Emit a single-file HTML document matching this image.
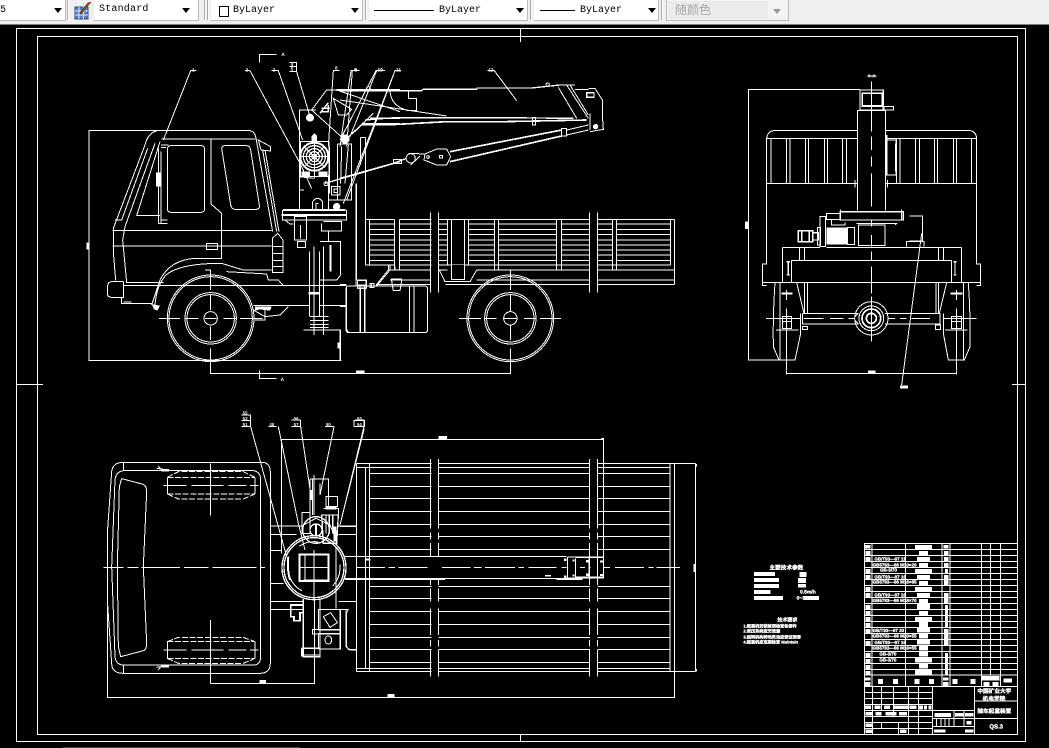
<!DOCTYPE html>
<html lang="zh"><head><meta charset="utf-8"><title>Drawing</title>
<style>
html,body{margin:0;padding:0;background:#000;width:1049px;height:748px;overflow:hidden}
#tb{position:absolute;left:0;top:0;width:1049px;height:24px;background:#efefef;border-bottom:1px solid #7f7f7f;font-family:"Liberation Mono",monospace;font-size:10px;color:#000}
#tb div{position:absolute}
.box{background:#fff;top:0;height:20px;border-bottom:1px solid #bbb;border-right:1px solid #bbb}
.sep{top:0;width:1px;height:20px;background:#aaa;border-right:1px solid #fff}
.ar{top:8px;width:0;height:0;border-left:4px solid transparent;border-right:4px solid transparent;border-top:5px solid #000}
.tx{top:5px;white-space:pre;line-height:11px}
svg{position:absolute;left:0;top:0}
svg .f{fill:#fff;stroke:none}
svg .k{fill:#000;stroke:none}
svg text{fill:#fff;stroke:none;font-family:"Liberation Sans","Noto Sans CJK SC",sans-serif;font-weight:bold}
svg .h text{stroke:#fff;stroke-width:.9}
</style></head><body>
<div id="tb">
<div class="box" style="left:0;width:65px"></div>
<div class="tx" style="left:0">5</div>
<div class="ar" style="left:54px"></div>
<div class="sep" style="left:67px"></div>
<div class="box" style="left:94px;width:104px"></div>
<div class="tx" style="left:99px;top:4px;letter-spacing:.2px">Standard</div>
<div class="ar" style="left:182px"></div>
<div class="sep" style="left:204px"></div><div class="sep" style="left:207px"></div>
<div class="box" style="left:211px;width:151px"></div>
<div style="left:219px;top:6px;width:8px;height:9px;border:1px solid #000;background:#fff"></div>
<div class="tx" style="left:233px">ByLayer</div>
<div class="ar" style="left:351px"></div>
<div class="sep" style="left:365px"></div>
<div class="box" style="left:369px;width:158px"></div>
<div style="left:374px;top:10px;width:60px;height:1px;background:#000"></div>
<div class="tx" style="left:439px">ByLayer</div>
<div class="ar" style="left:516px"></div>
<div class="sep" style="left:530px"></div>
<div class="box" style="left:534px;width:124px"></div>
<div style="left:540px;top:10px;width:35px;height:1px;background:#000"></div>
<div class="tx" style="left:580px">ByLayer</div>
<div class="ar" style="left:648px"></div>
<div class="sep" style="left:661px"></div>
<div style="left:666px;top:0;width:121px;height:20px;background:#f4f4f4;border:1px solid #bbb;border-top:0"></div>
<div style="left:668px;top:1px;width:100px;height:18px;background:#ebebeb"></div>
<div class="tx" style="left:675px;top:3px;font-family:'Liberation Sans','Noto Sans CJK SC',sans-serif;font-size:12px;line-height:14px;color:#a8a8a8">随颜色</div>
<div style="left:773px;top:9px;width:0;height:0;border-left:4px solid transparent;border-right:4px solid transparent;border-top:5px solid #999"></div>
<svg style="left:74px;top:2px" width="18" height="18" viewBox="0 0 18 18"><rect x="1" y="5" width="13" height="12" fill="#5a7fc0" stroke="#2c4a86"/><path d="M1 9H14M1 13H14M5 5V17M9.500 5V17" stroke="#dbe6f7" fill="none"/><path d="M6 12L15 1" stroke="#6b4a2a" stroke-width="2.500"/><path d="M15 1L17 0" stroke="#c33" stroke-width="2"/></svg>
</div>

<svg width="1049" height="748" viewBox="0 0 1049 748" style="top:0" fill="none" stroke="#fff" stroke-width="1" shape-rendering="crispEdges" text-rendering="geometricPrecision">
<!-- frames -->
<path d="M16.500 28.500H1025.500V741.500H16.500Z M37.500 36.500H1017.500V734.500H37.500Z M520.500 28.500V42 M520.500 734V741.500 M16.500 384.500H43 M1012 384.500H1025.500"/>
<path d="M63 747.500H300" stroke="#444"/>

<!-- SIDE VIEW -->
<g transform="translate(80,50) scale(.33333)" stroke-width="3">
<path d="M785 932H27V241H505Q525 243 528 265"/>
<path d="M240 241Q205 243 195 285L100 535V605L107 692"/>
<path d="M130 695H95Q82 695 82 715V730Q82 742 95 742H130V695M125 742V760H218M130 756H155"/>
<path d="M245 267H525M240 275L170 497H240M203 295L125 510H105M225 280L135 530L128 570L140 697H250"/>
<path d="M97 541H575M97 588H575M380 580H413V598H380Z"/>
<path d="M393 267V462L425 490V625H345Q270 630 240 690L215 765M425 640Q300 640 258 675Q230 705 225 765M425 640L490 660H575"/>
<rect x="262" y="287" width="112" height="200" rx="10"/>
<path d="M425 295Q425 287 435 287H500Q510 287 512 300L538 465Q540 478 528 478H465Q455 478 452 465Z"/>
<path d="M235 295V520M243 305V520M243 285H265M243 293H258M235 520H262M243 510H262"/>
<rect class="f" x="228" y="367" width="14" height="43"/>
<path d="M528 265L578 545M535 270L572 290V303L543 300ZM548 300L590 545M555 300L597 545"/>
<path d="M577 667V565L593 550L609 570V667ZM577 590H609M577 610H609M577 632H609M577 650H609"/>
<path d="M130 707H800M520 767H690M720 767H800M375 660H392V675M440 665L560 672L565 690H595L610 707M520 780L555 800L600 795L625 770M555 780V810H525"/>
<path class="f" d="M215 763L240 767L232 782L222 778ZM525 770H575L570 782L540 778L525 782Z"/>
<circle cx="392" cy="805" r="130"/><circle cx="392" cy="805" r="125"/><circle cx="392" cy="805" r="77"/><circle cx="392" cy="805" r="71"/><circle cx="392" cy="805" r="20"/>
<path d="M237 805H300M315 805H355M375 805H410M430 805H470M480 805H547M392 660V720M392 735V780M392 830V870M392 895V970H960"/>
<path d="M538 962V985H590M538 37V14H590"/>
<rect class="f" x="828" y="961" width="26" height="8"/><rect class="f" x="20" y="577" width="8" height="22"/><rect class="f" x="772" y="877" width="10" height="18"/>
<path d="M688 605V800M718 605V800M702 590V855M730 590V855M670 840H782V932M690 800H745M690 812H745M690 824H745M690 832H745"/>
<path d="M685 730H720" stroke-width="8"/>
<path d="M720 575H782V675L770 690H720M752 585V665" />
<path d="M752 585V665" stroke-width="6"/>
<path d="M609 480H797M605 495H800" stroke-width="5"/>
<path d="M607 480V510H800V480M615 510L630 522H640M730 515H785V543H725V520M745 543V575"/>
<path d="M643 500H680V570H643ZM652 575H677V593H652ZM662 525V565M698 480V455Q712 435 728 455V480M708 480V460H715"/>
<path d="M658 480V180H708M745 375V480M658 380L700 385M660 420H672M748 290V430"/>
<path d="M662 275H747V380H662Z"/>
<circle cx="703" cy="320" r="42" stroke-width="6"/><circle cx="703" cy="320" r="33" stroke-width="4"/><circle cx="703" cy="320" r="24" stroke-width="4"/><circle cx="703" cy="320" r="15" stroke-width="4"/><circle cx="703" cy="320" r="7" stroke-width="4"/>
<path d="M703 255V385M660 320H745M673 290L733 350M733 290L673 350"/>
<path class="f" d="M695 258L703 250L711 258V278H695ZM665 365H690V380H665ZM715 365H742V380H715Z"/>
<circle class="f" cx="690" cy="203" r="12"/>
<path d="M720 190L745 158M725 175H750M722 185H745V165" stroke-width="4"/>
<path d="M830 690V400M857 262V505M842 262H857M842 262V345M772 282H815V450H745M772 282V450M785 290L782 400M805 285L795 400"/>
<rect x="755" y="410" width="25" height="25"/><rect x="762" y="417" width="10" height="10"/>
<circle class="f" cx="795" cy="267" r="14"/><circle class="f" cx="770" cy="470" r="11"/>
<circle cx="738" cy="401" r="6"/>
<path d="M350 62H332L250 270M510 62H495M510 62L660 340L695 415M595 62H575M595 62L668 270M628 38H650V65H628M628 50H650M650 65L690 200M778 62H760L745 290M838 62H817L800 290M915 62H890L810 260M960 62H945L800 450"/>
<path d="M740 120L695 180L745 225L795 270L870 200M760 145L815 178L800 195H775ZM740 120H770L960 185M800 265L830 240L880 190"/>
<path d="M770 120H960" stroke-width="6"/><path d="M850 222H960M870 205H960" stroke-width="5"/>
<path d="M735 400L960 335" stroke-width="4"/>
<circle cx="865" cy="116" r="6"/>
<path d="M856 705H832V691H858V715H832M875 701H882V712H875Z"/>
<path d="M800 710V835Q800 848 812 848H960M842 715V848M855 715V848M888 706L925 660V645M857 645H960M857 508H945V660M868 508V645M945 522H868M945 538H868M945 553H868M945 570H868M945 585H868M945 600H868M945 615H868M945 631H868"/>
<path d="M857 400V645"/>
<text x="336" y="64" font-size="14">1</text><text x="497" y="64" font-size="14">2</text><text x="578" y="64" font-size="14">3</text><text x="765" y="58" font-size="14">8</text><text x="822" y="64" font-size="14">9</text><text x="893" y="64" font-size="14">10</text><text x="604" y="18" font-size="14">A</text><text x="602" y="993" font-size="14">A</text><text x="632" y="48" font-size="14">4</text><text x="632" y="62" font-size="14">5</text>
</g>

<g transform="translate(340,50) scale(.33333)" stroke-width="3">
<!-- bed -->
<path d="M77 508H1003M88 522H992M88 538H992M88 553H992M88 570H992M88 585H992M88 600H992M88 615H992M88 631H992M77 645H992"/>
<path class="k" d="M163 505H178V650H163ZM274 480H295V730H274ZM324 510H384V644H324ZM464 510H475V644H464ZM651 510H664V644H651ZM750 480H772V730H750ZM818 510H829V644H818Z"/>
<path d="M77 508V645M88 508V645M163 508V660M178 508V660M322 508V645M385 508V645M334 508V688H373V508M463 508V660M475 508V660M650 508V660M665 508V660M817 508V660M829 508V660M992 508V645M1003 508V703"/>
<path d="M272 488V728M296 488V728M749 488V728M773 488V728"/>
<path d="M150 645V660L110 708M150 660H272M150 690H272M112 703H272M410 660H749M773 660H1003M296 660H322M410 690H749M773 690H1003M773 703H1003M316 703H749M296 645H322M298 660L315 695H390L410 660"/>
<rect class="k" x="333" y="645" width="40" height="42"/><path d="M334 645V688H373V645"/>
<rect x="18" y="708" width="245" height="140" rx="8"/>
<path d="M60 708V848M73 708V848M208 708V848M222 708V848M0 704H20M0 770H18M0 840V930"/>
<path d="M155 687H185V692L180 722H160L155 692ZM52 690H80V714H52ZM90 700H102V712H90Z"/>
<circle cx="511" cy="805" r="130"/><circle cx="511" cy="805" r="125"/><circle cx="511" cy="805" r="77"/><circle cx="511" cy="805" r="71"/><circle cx="511" cy="805" r="20"/>
<path d="M357 805H423M433 805H470M490 805H532M552 805H590M600 805H663M511 660V720M511 735V785M511 825V870M511 895V972M0 970H512"/>
<rect class="f" x="48" y="962" width="26" height="8"/>
<!-- boom -->
<path d="M0 122H245L250 118H410L412 114H575L660 105H705" stroke-width="4"/>
<path d="M655 112L710 205M680 105L745 205M690 105L745 195M705 118H745M745 115H765L787 150V195L790 238L750 245M750 190V240"/>
<path d="M65 224H155L320 215H490L740 210" stroke-width="5"/>
<path d="M75 210L165 203H475L700 205" stroke-width="4"/>
<path d="M150 125Q155 170 205 182H230V145H205V125M0 150L320 198"/>
<rect x="740" y="128" width="22" height="14" stroke-width="4"/>
<circle class="f" cx="767" cy="230" r="8"/>
<rect x="578" y="203" width="8" height="22"/><circle cx="623" cy="104" r="5"/>
<path d="M330 305L665 240M330 335L665 258" stroke-width="5"/>
<path d="M665 236H680V258H665ZM680 240L745 225M680 255L745 240"/>
<path d="M255 312L290 297H320L332 320L320 345H290L252 330Z"/>
<rect x="299" y="316" width="8" height="8"/><circle cx="264" cy="321" r="4"/>
<circle cx="212" cy="325" r="14"/><path d="M212 345L240 318M205 310L255 312"/>
<path d="M0 385L160 340L200 325" stroke-width="4"/>
<path d="M160 340H185V328H160Z"/>
<path d="M50 62H33L0 290M130 62H108L0 270M183 62H165L10 460M463 62H443M463 62L530 152"/>
<path d="M48 707V400M76 262V505M62 262H76M62 262V345"/>
<text x="44" y="64" font-size="14">9</text><text x="113" y="64" font-size="14">10</text><text x="168" y="64" font-size="14">11</text><text x="445" y="64" font-size="14">12</text>
</g>

<!-- REAR VIEW -->
<g transform="translate(730,60) scale(.33333)" stroke-width="3">
<path d="M390 88H55V900H145"/>
<rect class="f" x="45" y="485" width="10" height="22"/>
<path d="M382 452V152H467V452"/>
<path d="M390 90H460V150H390Z" stroke-width="4"/>
<path d="M397 100H457V138H397Z" stroke-width="5"/>
<path d="M462 140H490V150H462ZM412 48H440" />
<path d="M382 212H130Q112 215 110 235V612H97V677H110M382 236H110M468 212H722Q738 215 740 235V612H752V677H740M468 236H740M110 370H382M468 370H740"/>
<path d="M123 236V370M169 236V370M180 236V370M226 236V370M236 236V370M283 236V370M293 236V370M338 236V370M350 236V370M510 236V370M556 236V370M568 236V370M613 236V370M623 236V370M670 236V370M680 236V370M725 236V370M500 236V370"/>
<path d="M470 225V345H498V240H470M497 250V335" stroke-width="4"/>
<path d="M375 360V382M472 360V382"/>
<path d="M330 455H520V480H330Z" stroke-width="4"/>
<path d="M332 448V480M514 448V480M290 460H330V478H290ZM270 470H287V560H270ZM352 503H374V553H352ZM385 495H465V557H385ZM380 490H500L495 495M305 480V495H345V488M262 503H272V555H262Z"/>
<rect class="f" x="290" y="503" width="63" height="50"/>
<path d="M205 512H248V545H205ZM215 512V545M238 512V545M248 518H265V540H248" stroke-width="4"/>
<path d="M538 468H578V543H538M530 545H582V560M530 545V560"/>
<path d="M157 563H270M290 563H695M157 563V668M695 563V668M208 563V600M224 563V600M625 563V600M640 563V600M184 601H665V667H184ZM97 668H752"/>
<path d="M170 605H180M175 605V645M170 645H180M670 605H680M675 605V645M670 645H680" stroke-width="4"/>
<path d="M135 668Q128 770 130 860L147 900H195L212 820M200 668L222 760M212 820V760M150 668V900"/>
<path d="M715 668Q722 770 720 860L703 900H655L640 820M650 668L628 760M640 820V760M700 668V900"/>
<path d="M224 668V760M232 668V760M618 668V760M626 668V760"/>
<path d="M155 700H188M662 700H698" stroke-width="6"/>
<path d="M218 760H385M465 760H630V792H465M218 760V792H385M385 760L375 770M385 792L375 782"/>
<circle cx="424" cy="775" r="50"/><circle cx="424" cy="775" r="37"/><circle cx="424" cy="775" r="28" stroke-width="5"/><circle cx="424" cy="775" r="15" stroke-width="5"/>
<path d="M218 800H232V808H218ZM617 795H632V808H617Z"/>
<path d="M138 810H205M645 810H712M158 770H185V785H158ZM158 785H185V805H158ZM665 770H695V805H665ZM665 785H695"/>
<path d="M108 775H210M222 775H280M300 775H340M355 775H375M475 775H495M510 775H530M545 775H600M640 775H740" />
<path d="M424 65V215M424 230V270M424 290V320M424 340V440M424 480V500M424 525V560M424 575V600M424 620V700M424 710V845" />
<path d="M170 690V720M170 745V930M680 690V720M680 745V930M170 940H680M170 932V944M680 932V944"/>
<rect class="f" x="414" y="931" width="22" height="9"/>
<path d="M575 520L515 975"/>
<rect class="f" x="510" y="977" width="24" height="9"/>
<text x="412" y="52" font-size="14">A-A</text>
</g>

<!-- PLAN VIEW -->
<g transform="translate(90,400) scale(.33333)" stroke-width="3">
<path d="M100 187H520Q540 190 541 215V790Q540 820 510 820H100Q65 820 65 790L52 600V400L65 215Q68 187 100 187Z"/>
<path d="M100 212H490Q512 215 512 240V770Q512 795 490 795H100Q78 795 75 770L65 500L75 240Q78 215 100 212Z"/>
<path d="M100 187V212M100 795V820"/>
<path d="M95 236L160 253Q170 258 170 275L160 500L170 730Q170 750 160 752L92 770L85 740L82 500L88 260Z"/>
<g stroke-dasharray="18 5">
<path d="M232 232H495M232 282H495M232 232L265 215H460L495 232M232 282L265 297H460L495 282"/>
<path d="M232 725H495M232 775H495M232 725L265 712H460L495 725M232 775L265 790H460L495 775"/>
</g>
<path d="M232 232V282M495 232V282M232 725V775M495 725V775M220 257H290M305 257H400M415 257H470M480 257H505M220 750H290M305 750H400M415 750H470M480 750H505M361 190V347M361 660V850"/>
<path d="M40 502H100M112 502H145M155 502H270M282 502H355M367 502H500M510 502H525" />
<circle cx="672" cy="503" r="96" stroke-width="4"/><circle cx="672" cy="503" r="90" stroke-width="4"/>
<circle cx="672" cy="503" r="78" stroke-width="3" stroke-dasharray="60 100"/>
<path d="M595 470Q590 503 600 540" stroke-width="6"/>
<path d="M628 463H716V543H628Z" stroke-width="6"/>
<path d="M645 463V543M672 450V600M628 502H716M640 540H716" />
<path d="M640 375L678 355L720 375L735 410" stroke-width="3"/>
<circle cx="678" cy="390" r="40" stroke-width="4"/><circle cx="678" cy="390" r="18" stroke-width="4"/>
<path d="M678 372V408" stroke-width="6"/>
<path d="M541 378H635M541 403H620M541 605H640M541 628H640M541 452H575M541 550H580M541 378V403M541 605V628M541 452V550M745 378H800M745 403H800M745 605H800M745 628H770Q768 630 768 640V740L780 750H800"/>
<path d="M636 338V400H660V338Z"/>
<path d="M770 470H800"/><path d="M766 537H800" stroke-width="5"/>
<path d="M640 597V770H690V600M635 745V770M640 765H690M635 745H690" stroke-width="4"/>
<path d="M685 628H752V690H685ZM685 700H752V747H685ZM668 688H752V702H668Z"/>
<path d="M700 650L722 638L742 668L720 682Z"/>
<ellipse cx="715" cy="720" rx="10" ry="12"/>
<path d="M602 615H640V638H630V662H612V650H602Z" stroke-width="5"/>
<path d="M660 237H715V320M660 237V345M668 237V345M672 225V345M690 250V285M708 290H742V320H708ZM700 325H745V345"/>
<path d="M662 270V300" stroke-width="7"/>
<path d="M695 345H745L740 430H700ZM708 345V400M718 345V400M728 345V400" stroke-width="4"/>
<path d="M706 325H740" stroke-width="8"/>
<path d="M735 380V425" stroke-width="8"/>
<path d="M738 440V625"/>
<path d="M482 45H455M482 62H455M482 80H455M482 45V80L590 470M560 80H535M565 80L625 370M632 60H605M632 80H605M632 60V80L665 300M732 80H705M732 80L690 285M822 60H795M822 80H795M822 60V80L750 375M625 370L645 450"/>
<path d="M575 118H930M575 118V460M361 850H674V600M52 620V892H930M200 205L235 210M200 802L235 797M205 198L215 210M205 810L215 797"/>
<rect class="f" x="215" y="207" width="22" height="7"/><rect class="f" x="215" y="795" width="22" height="7"/>
<rect class="f" x="508" y="840" width="20" height="9"/><rect class="f" x="892" y="882" width="22" height="9"/>
<rect class="f" x="828" y="476" width="15" height="6"/>
<text x="458" y="43" font-size="13">55</text><text x="458" y="60" font-size="13">53</text><text x="458" y="78" font-size="13">51</text><text x="538" y="78" font-size="13">48</text><text x="611" y="60" font-size="13">56</text><text x="611" y="78" font-size="13">57</text><text x="708" y="78" font-size="13">50</text><text x="801" y="60" font-size="13">53</text><text x="801" y="78" font-size="13">54</text>
</g>

<g transform="translate(340,420) scale(.33333)" stroke-width="3">
<path d="M0 58H790V475"/>
<rect class="f" x="295" y="48" width="26" height="9"/>
<path d="M88 130H1003M50 143H990M88 160H990M88 199H990M88 235H990M88 274H990M88 313H990M88 349H990M88 388H990M88 499H990M88 535H990M88 574H990M88 613H990M88 652H990M88 688H990M88 727H990M50 745H990M50 754H1003"/>
<path class="k" d="M274 110H295V775H274ZM750 110H772V775H750Z"/>
<path d="M50 130H88M50 130V754M77 143V745M88 130V754M990 130V754M1003 130V832H0M1003 754H1067M1003 130H1067M1067 130V754"/>
<path d="M272 117V325M272 337V358M272 369V495M272 505V545M272 565V645M272 660V680M272 690V770M296 117V325M296 337V358M296 369V495M296 505V545M296 565V645M296 660V680M296 690V770M748 117V325M748 337V358M748 369V495M748 505V545M748 565V645M748 660V680M748 690V770M773 117V325M773 337V358M773 369V495M773 505V545M773 565V645M773 660V680M773 690V770"/>
<path class="k" d="M90 410H680V474H90Z"/>
<path d="M15 409H680M315 475H650"/>
<path d="M15 477H315M650 477H728" stroke-width="5"/>
<path d="M0 320H50M0 343H50M0 545H50M0 568H25L20 578V680L25 688H50M0 568V688"/>
<path d="M682 411V474M707 415V474M682 411H790M682 474H790M748 411V474"/>
<path d="M707 412H790M707 472H790" stroke-width="5"/><path d="M748 412V472" stroke-width="5"/>
<path d="M48 442H135M145 442H165M175 442H262M306 442H392M402 442H425M435 442H525M535 442H552M565 442H650M665 442H680M720 442H735M745 442H752M792 442H810M825 442H912M925 442H940M950 442H1020"/>
<path d="M0 315L73 25M42 2H73V20H42Z"/>
<path class="f" d="M78 417H92V422H78ZM615 465H633V470H615ZM1060 432H1066V456H1060ZM142 822H164V831H142ZM1066 132H1071V140H1066ZM1066 747H1071V754H1066ZM783 54H792V58H783ZM672 415H680V423H672ZM672 466H680V474H672ZM697 418H704V425H697ZM697 463H704V470H697ZM738 420H746V428H738ZM738 460H746V468H738ZM780 421H789V427H780ZM780 462H789V468H780Z"/>
</g>

<!-- NOTES + TITLE BLOCK -->
<g class="h" transform="translate(740,535) scale(.33333)" stroke-width="3">
<text x="88" y="103" font-size="17">主要技术参数</text>
<path class="f" d="M42 111H105V123H42ZM42 129H117V141H42ZM42 147H117V159H42ZM42 165H92V177H42ZM42 183H129V195H42ZM178 111H200V126H178ZM174 129H198V144H174ZM174 147H198V158H174ZM190 183H237V195H190Z"/>
<text x="180" y="175" font-size="15">0.5m/h</text><text x="170" y="193" font-size="15">0~3</text>
<text x="112" y="259" font-size="15">技术要求</text>
<text x="10" y="278" font-size="12.500">1.起重机安装前须检查各部件</text>
<text x="10" y="293" font-size="12.500">2.液压系统应无泄漏</text>
<text x="10" y="311" font-size="12.500">3.回转机构转动灵活应保证润滑</text>
<text x="10" y="326" font-size="12.500">4.起重机应定期检查 Maintain</text>

<path d="M373 25H832V598H373ZM373 44H832M373 62H832M373 80H832M373 98H832M373 116H832M373 134H832M373 152H832M373 170H832M373 188H832M373 206H832M373 224H832M373 242H832M373 260H832M373 278H832M373 296H832M373 314H832M373 332H832M373 350H832M373 368H832M373 386H832M373 404H832M373 420H832M373 455H832"/>
<path d="M396 25V455M496 25V455M606 25V455M630 25V455M724 25V455M752 25V420M782 25V455"/>
<path class="f" d="M525 30H576V42H525ZM537 48H564V60H537ZM531 66H570V78H531ZM537 84H564V96H537ZM525 102H576V114H525ZM531 120H570V132H531ZM537 138H564V150H537ZM525 156H576V168H525ZM531 174H570V186H531ZM537 192H564V204H537ZM531 206H570V224H531ZM537 228H564V240H537ZM525 246H576V258H525ZM537 260H564V278H537ZM531 279H570V292H531ZM537 297H564V310H537ZM531 315H570V328H531ZM537 333H564V346H537ZM537 351H564V364H537ZM525 369H576V382H525ZM537 387H564V400H537ZM525 405H576V418H525Z"/>
<path class="f" d="M375 30H392V40H375ZM611 30H626V40H611ZM377 48H392V60H377ZM377 66H392V78H377ZM377 102H392V114H377ZM377 120H392V132H377ZM377 156H392V168H377ZM377 174H392V186H377ZM377 210H392V222H377ZM377 228H392V240H377ZM377 246H392V258H377ZM377 264H392V276H377ZM377 282H392V294H377ZM377 318H392V330H377ZM377 354H392V366H377ZM377 372H392V384H377ZM377 390H392V402H377ZM377 408H392V418H377ZM375 427H391V437H375ZM375 441H391V453H375ZM609 427H625V437H609ZM609 441H625V453H609ZM414 432H429V447H414ZM459 432H474V447H459ZM523 432H538V447H523ZM567 432H582V447H567ZM637 432H652V447H637ZM691 432H706V447H691ZM725 423H778V437H725ZM730 441H748V453H730ZM757 441H775V453H757ZM790 431H816V443H790ZM612 48H626V60H612ZM612 66H626V78H612ZM612 84H626V96H612ZM615 102H624V114H615ZM612 120H626V150H612ZM612 174H626V204H612ZM615 210H624V276H615ZM612 282H626V330H612ZM615 354H624V418H615Z"/>
<g font-size="13.500">
<text x="403" y="77">GB/T93—87 11</text><text x="398" y="95">GB5783—86 M10×20</text><text x="420" y="109">GB-3/70</text><text x="403" y="131">GB/T93—87 16</text><text x="398" y="146">GB5783—86 M16×65</text><text x="403" y="185">GB/T93—87 16</text><text x="398" y="201">GB5783—86 M16×70</text><text x="398" y="291">GB/T93—87 20</text><text x="398" y="307">GB5783—86 M20×55</text><text x="403" y="327">GB/T93—87 16</text><text x="398" y="343">GB5783—86 M16×55</text><text x="418" y="362">GB-3/70</text><text x="418" y="380">GB-3/70</text>
</g>
<path d="M373 473H578M373 491H578M373 509H578M373 527H578M373 545H578M373 563H578M373 580H578M398 455V598M425 455V527M460 455V527M505 455V598M536 455V598M578 455V598M425 563V580M460 527V545M475 563V598"/>
<path d="M578 527H704M578 550H704M578 575H704M704 455V598M704 498H832M704 550H832M642 527V575M672 527V575M590 550V575M603 550V575M615 550V575M627 550V575"/>
<path class="f" d="M375 512H393V522H375ZM403 512H421V522H403ZM432 512H450V522H432ZM462 512H504V522H462ZM509 512H529V522H509ZM537 512H549V524H537ZM552 512H561V524H552ZM565 512H575V524H565ZM377 531H397V541H377ZM406 531H424V541H406ZM436 531H470V541H436ZM477 531H501V541H477ZM583 534H633V546H583ZM645 534H670V544H645ZM675 534H700V544H675ZM377 566H397V576H377ZM377 584H397V594H377ZM480 584H500V594H480ZM582 583H617V593H582ZM675 583H701V593H675ZM680 558H694V568H680Z"/>
<text x="712" y="474" font-size="17">中国矿业大学</text>
<text x="728" y="497" font-size="17">机电学院</text>
<text x="712" y="534" font-size="17">随车起重装置</text>
<text x="748" y="580" font-size="18">QS.3</text>
</g>
</svg>
</body></html>
